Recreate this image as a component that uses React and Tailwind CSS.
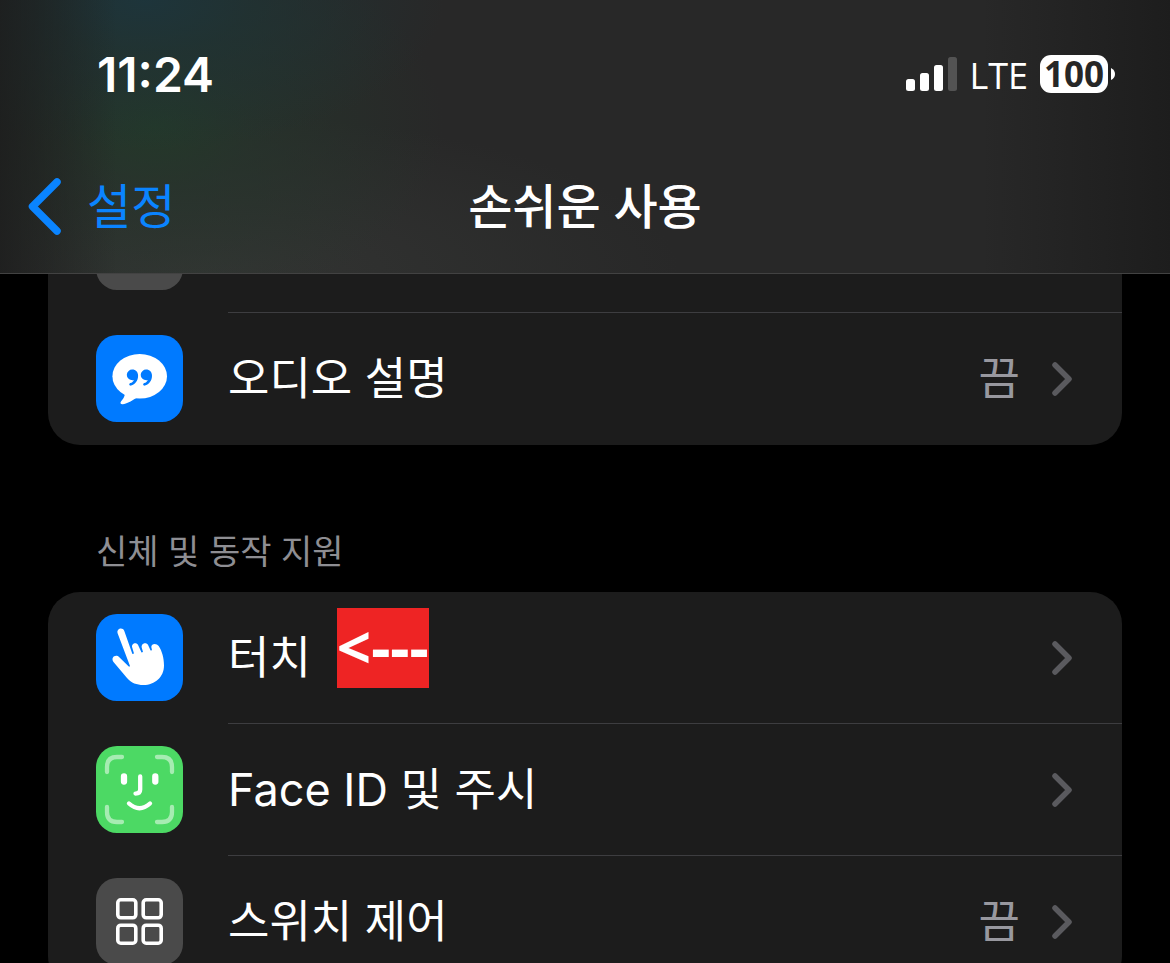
import React from 'react'

const groups = [
  {
    id: 'audio',
    items: [
      { id: 'subtitle', icon: 'blank', color: 'bg-[#4a4a4a]' },
      { id: 'audio-desc', icon: 'bubble', color: 'bg-[#007aff]', label: '오디오 설명', value: '끔' },
    ],
  },
  {
    id: 'motor',
    title: '신체 및 동작 지원',
    items: [
      { id: 'touch', icon: 'hand', color: 'bg-[#007aff]', label: '터치', note: '<---' },
      { id: 'faceid', icon: 'face', color: 'bg-[#4cd964]', label: 'Face ID 및 주시' },
      { id: 'switch', icon: 'grid', color: 'bg-[#4a4a4a]', label: '스위치 제어', value: '끔' },
    ],
  },
]

const quotePath =
  'M36.300 34.600a5.300 5.300 0 0 0 -1.200 10.500c1.100.2 2.100.1 2.900-.2c-.8 1.600-2 2.500-3.700 3.200c-1.900.8-1.200 3 .8 2.500c4-1.100 7-5 7-9.800c0-3.700-2.400-6.200-5.800-6.200z'

const glyphs = {
  blank: null,
  bubble: (
    <>
      <ellipse cx="43.700" cy="41.300" rx="27.300" ry="22.300" fill="#fff" />
      <path d="M29 56C29.500 61 27 64 25 66.500C23.700 68.300 25 69.600 27 69.200C33 68.200 36.500 65 41 62.500Z" fill="#fff" />
      <g fill="#007aff">
        <path d={quotePath} />
        <path d={quotePath} transform="translate(13.900 0)" />
      </g>
    </>
  ),
  hand: (
    <path
      fill="#fff"
      d="M21.600 19.200C20.300 14.600 26.700 12.700 28.300 17L36.400 40L38 39.600L36.200 33.500C35 29.500 40.300 27.700 42.200 31.200L45.500 38.500L47 38L45.700 33.500C45 29.200 50.400 27.800 52.200 31.200L54.600 36.600L56 36.200L55.300 33C55.300 29.400 60.400 28.800 62.700 32C66 37 68 44 68 51.500C68 63 59 71 47.500 71C40.500 71 35.500 69 31 64L17.500 48C14.300 43.700 19.600 39.600 23.300 43.300L32.500 52.300C33.300 53 34.200 52.500 33.800 51.500Z"
    />
  ),
  face: (
    <g fill="none" stroke="#fff" strokeLinecap="round">
      <g strokeWidth="4.300" strokeOpacity="0.5">
        <path d="M26 11H21Q11 11 11 21V26" />
        <path d="M61 11H66Q76 11 76 21V26" />
        <path d="M11 61V66Q11 76 21 76H26" />
        <path d="M76 61V66Q76 76 66 76H61" />
      </g>
      <path d="M28 30.500V35.500M59.300 30.500V35.500" strokeWidth="6.300" />
      <path d="M44.200 30.500V43.500Q44.200 47.600 39.500 47.600" strokeWidth="4.300" />
      <path d="M33 57.500Q43.500 67 54 57.500" strokeWidth="4.300" />
    </g>
  ),
  grid: (
    <g fill="none" stroke="#fff" strokeWidth="3.600">
      <rect x="21.800" y="21.800" width="18" height="18" rx="3" />
      <rect x="47.200" y="21.800" width="18" height="18" rx="3" />
      <rect x="21.800" y="47.200" width="18" height="18" rx="3" />
      <rect x="47.200" y="47.200" width="18" height="18" rx="3" />
    </g>
  ),
}

function AppIcon({ name, color }) {
  return (
    <span className={`mt-[22px] mb-[23px] size-[87px] shrink-0 overflow-hidden rounded-[21px] ${color}`}>
      <svg viewBox="0 0 87 87" className="size-full" aria-hidden="true">{glyphs[name]}</svg>
    </span>
  )
}

function Row({ item, last }) {
  return (
    <li>
      <a href={`#${item.id}`} className="flex gap-[45px] pl-12">
        <AppIcon name={item.icon} color={item.color} />
        <span className={`flex min-w-0 flex-1 items-center pr-[50px] ${last ? '' : 'border-b border-[#3d3d40]'}`}>
          <span className="relative text-[45px] leading-[60px] whitespace-nowrap">
            {item.label}
            {item.note && (
              <mark className="absolute -top-5 left-full ml-[26px] h-20 bg-[#ee2424] font-['Noto_Sans'] text-[60px] leading-[76px] font-bold text-white">
                {item.note}
              </mark>
            )}
          </span>
          <span className="ml-auto text-[45px] leading-[60px] text-[#98989f]">{item.value}</span>
          <svg viewBox="0 0 20 34" className="ml-8 h-[34px] w-5 shrink-0" fill="none" stroke="#5a5a5e" strokeWidth="5.500" strokeLinecap="round" strokeLinejoin="round" aria-hidden="true">
            <path d="M3 3L17 17L3 31" />
          </svg>
        </span>
      </a>
    </li>
  )
}

function StatusBar() {
  return (
    <div className="flex h-[148px] items-center justify-between pr-[55px] pl-[97px]">
      <time className="pt-0.5 text-[48px] leading-[60px] font-semibold">11:24</time>
      <div className="flex items-center">
        <svg viewBox="0 0 51 34" className="h-[34px] w-[51px]" fill="#fff" role="img" aria-label="신호 세기">
          <rect y="22" width="9" height="12" rx="2.500" />
          <rect x="14" y="16" width="9" height="18" rx="2.500" />
          <rect x="28" y="8" width="9" height="26" rx="2.500" />
          <rect x="42" width="9" height="34" rx="2.500" fillOpacity="0.2" />
        </svg>
        <span className="ml-3 pt-1 font-['Open_Sans'] text-[36px] leading-10 font-medium">LTE</span>
        <span className="ml-3 flex h-[38px] w-[68px] items-center justify-center rounded-[11px] bg-white font-['Open_Sans'] text-[35px] leading-[38px] font-bold text-[#262626]">100</span>
        <svg viewBox="0 0 4 12" className="ml-[3px] h-3 w-1" fill="#fff" aria-hidden="true">
          <path d="M0 0Q4 2 4 6T0 12Z" />
        </svg>
      </div>
    </div>
  )
}

export default function App() {
  return (
    <div className="flex h-screen flex-col overflow-hidden bg-black font-['Inter','Noto_Sans_CJK_KR',sans-serif] text-white">
      <header className="relative z-10 shrink-0 border-b border-[#424242] bg-[#282828] bg-[linear-gradient(90deg,rgba(28,28,28,.8)_0%,transparent_10%,transparent_84%,rgba(28,28,28,.9)_100%),radial-gradient(300px_150px_at_145px_0px,rgba(28,54,62,.85),rgba(30,52,54,.65)_35%,transparent),radial-gradient(290px_190px_at_155px_125px,rgba(35,58,42,.9),rgba(37,55,44,.6)_35%,transparent),radial-gradient(480px_160px_at_200px_274px,rgba(54,56,54,.8),transparent)]">
        <StatusBar />
        <nav className="grid h-[125px] grid-cols-3 items-center px-7 pb-2">
          <a href="#settings" className="flex items-center gap-[26px] text-[48px] leading-[60px] text-[#0a84ff]">
            <svg viewBox="0 0 33 57" className="h-[57px] w-[33px]" fill="none" stroke="currentColor" strokeWidth="7.500" strokeLinecap="round" strokeLinejoin="round" aria-hidden="true">
              <path d="M29 4L4.500 28.500L29 53" />
            </svg>
            설정
          </a>
          <h1 className="text-center text-[48px] leading-[60px] font-medium whitespace-nowrap">손쉬운 사용</h1>
        </nav>
      </header>

      {/* the list is scrolled, its first row is partly under the header */}
      <main className="-mt-[93px] px-12">
        {groups.map((g) => (
          <section key={g.id}>
            {g.title && (
              <h2 className="px-12 pt-[82px] pb-[15px] text-[34px] leading-[50px] text-[#8e8e93]">{g.title}</h2>
            )}
            <ul className={`bg-[#1c1c1c] ${g.title ? 'rounded-[32px]' : 'rounded-b-[32px]'}`}>
              {g.items.map((item, i) => (
                <Row key={item.id} item={item} last={i === g.items.length - 1} />
              ))}
            </ul>
          </section>
        ))}
      </main>
    </div>
  )
}
